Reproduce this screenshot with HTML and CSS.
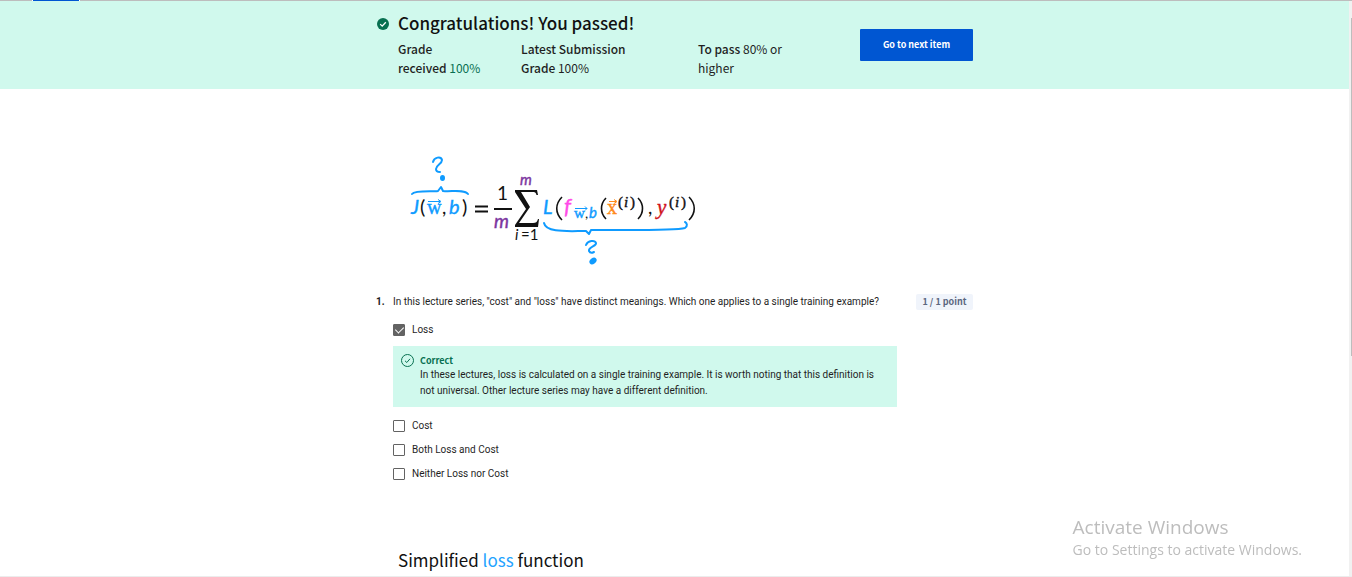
FILE: index.html
```html
<!DOCTYPE html>
<html lang="en">
<head>
<meta charset="utf-8">
<title>Quiz results</title>
<link rel="stylesheet" href="styles.css">
</head>
<body>
<div class="tab-strip"><span class="tab-marker"></span></div>
<div class="scrollbar"><span class="scroll-thumb"></span></div>
<header class="banner">
  <div class="column banner-row">
    <svg class="status-icon" viewBox="0 0 12 12" aria-hidden="true"><circle cx="6" cy="6" r="6" fill="#087051"/><path d="M3.2 6.1l2 2 3.6-3.9" fill="none" stroke="#fff" stroke-width="1.3"/></svg>
    <div class="summary">
      <h1 class="title">Congratulations! You passed!</h1>
      <div class="grades">
        <p class="grade-a"><b>Grade<br>received</b> <span class="green">100%</span></p>
        <p class="grade-b"><b>Latest Submission<br>Grade</b> 100%</p>
        <p class="grade-c"><b>To pass</b> 80% or<br>higher</p>
      </div>
    </div>
    <button class="next" type="button">Go to next item</button>
  </div>
</header>
<main class="column quiz">
  <svg class="formula" viewBox="398 154 304 112" role="img" aria-label="Cost function formula">
    <g fill="none" stroke="#0f9bff" stroke-width="2" stroke-linecap="round" stroke-linejoin="round">
      <path d="M433 162C434 157 441 156 442 160C442 164 436 165 436 169C436 171 438 172 440 172"/>
      <path d="M412 194C415 190 433 192 438 191L441 187L443 191C451 192 464 189 468 194"/>
      <path d="M544 223C546 233 568 231 586 231L589 234L591 230C615 230 675 231 685 228C688 226 687 223 685 222"/>
      <path d="M586 245C588 240 595 240 596 243C597 246 588 247 589 251C590 253 592 253 594 252"/>
    </g>
    <g fill="#0f9bff"><ellipse cx="442.500" cy="178" rx="2.500" ry="3"/><ellipse cx="593" cy="261" rx="4" ry="2.800" transform="rotate(-40 593 261)"/></g>
    <g class="math">
      <text class="blue it" x="411" y="214" font-size="20">J</text>
      <text x="420" y="214" font-size="20">(</text>
      <text class="blue serif" x="427" y="214" font-size="20">w</text>
      <text x="442" y="214" font-size="19">,</text>
      <text class="blue it" x="449" y="214" font-size="20">b</text>
      <text x="462" y="214" font-size="20">)</text>
      <text x="497" y="200" font-size="19">1</text>
      <text class="purple it" x="494" y="228" font-size="19">m</text>
      <text class="purple it" x="520" y="185" font-size="15">m</text>
      <text x="515" y="240" font-size="15"><tspan class="it">i</tspan><tspan x="521">=1</tspan></text>
      <text class="blue it" x="543" y="214" font-size="20">L</text>
      <text class="pink it" x="564" y="214" font-size="22">f</text>
      <text class="blue serif" x="574" y="218" font-size="15">w</text>
      <text x="585" y="218" font-size="14">,</text>
      <text class="blue it" x="589" y="218" font-size="15">b</text>
      <text class="orange serif" x="607" y="214" font-size="20">x</text>
      <text class="serif" x="618" y="207" font-size="15">(<tspan class="it" x="624">i</tspan><tspan x="630">)</tspan></text>
      <text x="648" y="214" font-size="19">,</text>
      <text class="red serif it" x="657" y="214" font-size="21">y</text>
      <text class="serif" x="669" y="207" font-size="15">(<tspan class="it" x="675">i</tspan><tspan x="681">)</tspan></text>
    </g>
    <g fill="none" stroke="#111" stroke-width="1.600">
      <path d="M475 206.500H488M475 211.500H488" stroke-width="2"/>
      <path d="M494 209H512" stroke-width="2"/>
      <path d="M562 197C555 204 555 213 562 220M606 198C600 204 600 213 606 219M638 198C644 204 644 213 638 219M689 197C696 204 696 213 689 220"/>
    </g>
    <path fill="#111" d="M515 190H537L538 195H536.500C536 192.500 535 192 532 192H521L530 207L519 223H533C536 223 537 222 538 219H539L538 227H515V225L526 209L515 192Z"/>
    <g fill="none" stroke="#0f9bff"><path d="M428 201.500H440M438 199.500l3 2-3 2M575 208.500H587M585 206.500l2 2-2 2"/><path stroke="#ff8a1c" d="M609 201.500H616M614 199.500l3 2-3 2"/></g>
  </svg>

  <form class="question">
    <div class="prompt-row">
      <span class="number">1.</span>
      <p class="prompt">In this lecture series, "cost" and "loss" have distinct meanings. Which one applies to a single training example?</p>
      <span class="points">1 / 1 point</span>
    </div>
    <div class="answers">
      <label class="option"><input type="checkbox" checked>Loss</label>
      <section class="feedback">
        <svg class="feedback-icon" viewBox="0 0 13 13" aria-hidden="true"><g fill="none" stroke="#087051"><circle cx="6.500" cy="6.500" r="6"/><path d="M4 6.800l1.800 1.700 3.200-3.700"/></g></svg>
        <div>
          <h2 class="feedback-title">Correct</h2>
          <p class="feedback-text">In these lectures, loss is calculated on a single training example. It is worth noting that this definition is<br>not universal. Other lecture series may have a different definition.</p>
        </div>
      </section>
      <label class="option"><input type="checkbox">Cost</label>
      <label class="option"><input type="checkbox">Both Loss and Cost</label>
      <label class="option"><input type="checkbox">Neither Loss nor Cost</label>
    </div>
  </form>
  <h2 class="next-heading">Simplified <span class="loss">loss</span> function</h2>
</main>
<aside class="watermark"><p class="watermark-title">Activate Windows</p><p class="watermark-text">Go to Settings to activate Windows.</p></aside>
<div class="bottom-line"></div>
</body>
</html>
```
FILE: styles.css
```css
* { box-sizing: border-box; }
body {
  margin: 0;
  min-height: 100vh;
  padding-right: 3px;
  background: #fff;
  color: #1f1f1f;
  font: 10px/16px Roboto, sans-serif;
  overflow: hidden;
}
h1, h2, p { margin: 0; }
.tab-strip { height: 1px; margin-right: -3px; padding-left: 33px; background: #bdbdbd; }
.tab-marker { display: block; width: 46px; height: 1px; background: #0056d2; outline: 1px solid #fff; clip-path: inset(0 -2px); }
.scrollbar { position: fixed; top: 1px; right: 0; bottom: 0; width: 3px; background: #f1f1f1; }
.scroll-thumb { display: block; width: 1px; height: 338px; margin: 17px 0 0 2px; background: #bdbdbd; }
.column { width: 100%; max-width: 597px; margin: 0 auto; }
.banner { padding-bottom: 10px; background: #d0f9ed; font-family: "Noto Sans CJK SC", sans-serif; }
.banner-row { display: flex; align-items: flex-start; }
.status-icon { width: 12px; height: 12px; margin: 17px 9px 0 1px; }
.summary { flex: 1; padding-top: 9px; }
.title { font-size: 17px; line-height: 25px; font-weight: 500; color: #111; }
.grades { display: flex; padding-top: 4px; font-size: 12px; line-height: 19px; padding-bottom: 2px; }
.grades b { font-weight: 500; }
.grade-a { width: 123px; }
.grade-b { width: 177px; }
.grade-c { width: 100px; }
.green { color: #087051; }
.next {
  width: 113px; height: 32px; margin-top: 28px; padding: 0;
  border: 0; border-radius: 1px; background: #0056d2; color: #fff;
  font: bold 9px/16px "Noto Sans CJK SC", sans-serif;
}
.formula { display: block; width: 304px; height: 112px; margin: 65px 0 0 22px; }
.math { font-family: Lato, sans-serif; fill: #111; stroke: #111; stroke-width: 0; }
.serif { font-family: "Liberation Serif", serif; stroke-width: 0.4px; }
.it { font-style: italic; }
.blue { fill: #0f9bff; stroke: #0f9bff; stroke-width: 0.4px; }
.purple { fill: #7c35a0; stroke: #7c35a0; stroke-width: 0.4px; }
.pink { fill: #ff4be8; stroke: #ff4be8; stroke-width: 0.4px; }
.orange { fill: #ff8a1c; stroke: #ff8a1c; }
.red { fill: #d0121b; stroke: #d0121b; }
.question { padding-top: 28px; }
.prompt-row { display: flex; }
.number { width: 17px; font-weight: 700; }
.prompt { flex: 1; white-space: nowrap; }
.points { width: 57px; border-radius: 2px; background: #f0f4fb; color: #5b6780; font: 700 9px/16px "Noto Sans CJK SC", sans-serif; text-align: center; }
.answers { padding-left: 17px; padding-top: 8px; }
.option { display: flex; align-items: center; gap: 7px; height: 24px; }
.option input {
  appearance: none; position: relative; width: 12px; height: 12px; margin: 0;
  border: 1px solid #636363; border-radius: 1px; background: #fff;
}
.option input:checked { background: #636363; }
.option input:checked::after {
  content: ""; position: absolute; left: 3px; top: 0; width: 4px; height: 7px;
  border: solid #fff; border-width: 0 1px 1px 0; transform: rotate(45deg);
}
.feedback { display: flex; gap: 6px; max-width: 504px; margin: 4px 0 7px; padding: 8px 0 8px 8px; background: #d0f9ed; }
.feedback-icon { flex: none; width: 13px; height: 13px; }
.feedback-title { font: 700 9px/13px "Noto Sans CJK SC", sans-serif; color: #087051; }
.feedback-text { white-space: nowrap; }
.next-heading { padding: 62px 0 0 22px; font: 17px/24px "Noto Sans CJK SC", sans-serif; color: #111; }
.loss { color: #23a3ff; }
.watermark { position: fixed; right: 50px; bottom: 17px; color: #bdbdbd; font-family: "Open Sans", sans-serif; }
.watermark-title { font-size: 19px; line-height: 25px; }
.watermark-text { font-size: 14px; line-height: 20px; }
.bottom-line { position: fixed; left: 0; right: 0; bottom: 0; height: 1px; background: #ececec; }
```
